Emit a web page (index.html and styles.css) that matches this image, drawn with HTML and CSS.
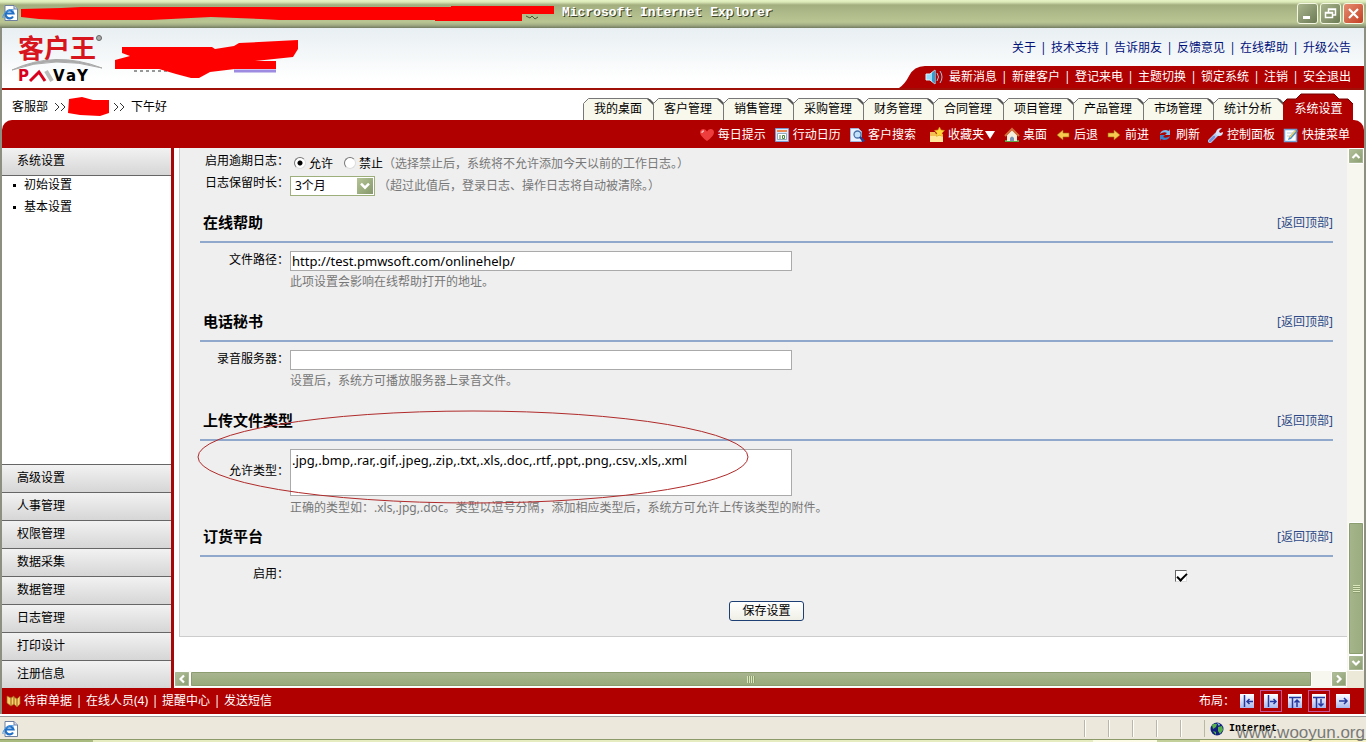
FILE: index.html
```html
<!DOCTYPE html>
<html lang="zh-CN">
<head>
<meta charset="utf-8">
<title>Microsoft Internet Explorer</title>
<link rel="stylesheet" href="styles.css">
</head>
<body>
<svg class="defs" aria-hidden="true">
  <defs>
    <linearGradient id="orb" x1="0" y1="0" x2="0" y2="1"><stop offset="0" stop-color="#ffffff"/><stop offset="1" stop-color="#a9b8ee"/></linearGradient>
    <symbol id="tab" viewBox="0 0 71 22"><path d="M.5 22V5.500L5.500.5H65.500L70.500 5.500V22" fill="#f8f8ec" stroke="#777"/><path d="M64 1h3l4 4v3z" fill="#555"/></symbol>
    <symbol id="tab-on" viewBox="0 0 71 27"><path d="M0 27V10l4-4h9l5-5h33l5 5h9l5 5v16z" fill="#b00000"/><path d="M0 10l4-4h9l5-5h33l5 5h9l5 5" fill="none" stroke="#700"/></symbol>
    <symbol id="ie" viewBox="0 0 16 16"><path d="M3 .5h9l3.500 3.500V15.500H3z" fill="#fff" stroke="#6f7f9f"/><path d="M12 .5V4h3.500" fill="#cdd9f2" stroke="#6f7f9f"/><path d="M11 11.500A4 4 0 1 1 11.500 8.500H4" fill="none" stroke="#2170c8" stroke-width="2.200"/><path d="M1 13C0 9 7 3 12 5" fill="none" stroke="#3f92dd"/></symbol>
    <symbol id="down" viewBox="0 0 14 14"><path d="M3.500 5l3.500 3.500L10.500 5" fill="none" stroke="#fff" stroke-width="2.200"/></symbol>
    <symbol id="up" viewBox="0 0 14 14"><path d="M3.500 9L7 5.500 10.500 9" fill="none" stroke="#fff" stroke-width="2.200"/></symbol>
    <symbol id="left" viewBox="0 0 14 14"><path d="M9 3.500L5.500 7 9 10.500" fill="none" stroke="#fff" stroke-width="2.200"/></symbol>
    <symbol id="right" viewBox="0 0 14 14"><path d="M5 3.500L8.500 7 5 10.500" fill="none" stroke="#fff" stroke-width="2.200"/></symbol>
  </defs>
</svg>

<header class="titlebar">
  <svg class="title-icon" width="16" height="16"><use href="#ie"/></svg>
  <svg class="title-mask" width="540" height="24" aria-hidden="true"><path d="M0 7L40 6 60 5H430V4H533V12H501V19H414V18H258L240 17 190 15 150 17 130 18H40L18 17 0 15z" fill="#f00"/><path d="M505 14l4 2 2-2 3 3 3-2" fill="none" stroke="#4b5433"/></svg>
  <h1 class="title-text">Microsoft Internet Explorer</h1>
  <div class="win-buttons">
    <button class="win" aria-label="最小化"><svg width="17" height="17"><path d="M4 11h7v3H4z" fill="#fff"/></svg></button>
    <button class="win" aria-label="还原"><svg width="17" height="17"><path d="M6.500 7V4h7v6H11M3.500 7.500h7v5h-7zM6 4.500h8M3 8h8" fill="none" stroke="#fff" stroke-width="1.500"/></svg></button>
    <button class="win win-close" aria-label="关闭"><svg width="17" height="17"><path d="M4 4l9 9M13 4l-9 9" stroke="#fff" stroke-width="2.200"/></svg></button>
  </div>
</header>

<div class="app">
  <div class="banner">
    <svg class="logo" width="100" height="58" role="img" aria-label="客户王">
      <text class="logo-cn" x="8" y="30">客户王</text>
      <circle cx="89" cy="10" r="2.500" fill="#aaa" stroke="#666"/>
      <path d="M2 42Q45 22 92 40Q45 27 2 42z" fill="#aaa" stroke="#aaa"/>
      <g class="logo-en"><text x="8" y="53" fill="#d8001c">P</text><path d="M20 53L29 44 35 53" fill="none" stroke="#d8001c" stroke-width="3"/><path d="M36 43L42 53" stroke="#bbb" stroke-width="4"/><text x="43" y="53">V</text><text x="56" y="53">a</text><text x="67" y="53">Y</text></g>
    </svg>
    <svg class="banner-mask" width="190" height="50" aria-hidden="true"><path d="M120 32h42" stroke="#9c8be0" stroke-width="3"/><path d="M20 32h35" stroke="#333" stroke-dasharray="3 3"/><path d="M8 8H98L101 10 120 7 125 4 184 1V10L179 18 141 22H162V30H121L96 33 85 39H77L62 35 45 30H1V21L16 17 8 14z" fill="#f00"/></svg>
    <div class="banner-links">
      <nav class="links links-top"><a href="#">关于</a><i>|</i><a href="#">技术支持</a><i>|</i><a href="#">告诉朋友</a><i>|</i><a href="#">反馈意见</a><i>|</i><a href="#">在线帮助</a><i>|</i><a href="#">升级公告</a></nav>
      <nav class="links links-red">
        <svg class="curve" width="26" height="22" aria-hidden="true"><path d="M0 22Q6 18 10 10Q15 0 26 0V22z" fill="#b00000"/></svg>
        <svg class="speaker" width="19" height="16" aria-hidden="true"><path d="M1 5h4l5-4v14L5 11H1z" fill="#9adcf8" stroke="#d9f4ff"/><path d="M7 4v8l3 3V1z" fill="#2e9dd2"/><path d="M12 4q3 4 0 8M15 2q4 6 0 12" fill="none" stroke="#9cc9e8"/></svg>
        <a href="#">最新消息</a><i>|</i><a href="#">新建客户</a><i>|</i><a href="#">登记来电</a><i>|</i><a href="#">主题切换</a><i>|</i><a href="#">锁定系统</a><i>|</i><a href="#">注销</a><i>|</i><a href="#">安全退出</a>
      </nav>
    </div>
  </div>

  <div class="tabs-row">
    <div class="crumbs"><span>客服部</span><svg width="12" height="10"><path d="M1 1l4 4-4 4M7 1l4 4-4 4" fill="none" stroke="#333"/></svg><svg class="crumb-mask" width="43" height="20" aria-hidden="true"><path d="M1 2L14 0 25 3H41V16L32 19 12 18 0 16z" fill="#f00"/></svg><svg width="12" height="10"><path d="M1 1l4 4-4 4M7 1l4 4-4 4" fill="none" stroke="#333"/></svg><span>下午好</span></div>
    <nav class="tabs">
      <a class="tab" href="#"><svg><use href="#tab"/></svg><span>我的桌面</span></a>
      <a class="tab" href="#"><svg><use href="#tab"/></svg><span>客户管理</span></a>
      <a class="tab" href="#"><svg><use href="#tab"/></svg><span>销售管理</span></a>
      <a class="tab" href="#"><svg><use href="#tab"/></svg><span>采购管理</span></a>
      <a class="tab" href="#"><svg><use href="#tab"/></svg><span>财务管理</span></a>
      <a class="tab" href="#"><svg><use href="#tab"/></svg><span>合同管理</span></a>
      <a class="tab" href="#"><svg><use href="#tab"/></svg><span>项目管理</span></a>
      <a class="tab" href="#"><svg><use href="#tab"/></svg><span>产品管理</span></a>
      <a class="tab" href="#"><svg><use href="#tab"/></svg><span>市场管理</span></a>
      <a class="tab" href="#"><svg><use href="#tab"/></svg><span>统计分析</span></a>
      <a class="tab tab-on" href="#"><svg><use href="#tab-on"/></svg><span>系统设置</span></a>
    </nav>
  </div>

  <nav class="toolbar">
    <a href="#"><svg width="16" height="16"><path d="M8 14Q1 9 1 5.500Q1 2 4.500 2Q7 2 8 4.500Q9 2 11.500 2Q15 2 15 5.500Q15 9 8 14z" fill="#ee3d3d"/><path d="M3 6q0-2 2-2" fill="none" stroke="#ffb0b0" stroke-width="1.500"/></svg>每日提示</a>
    <a href="#"><svg width="16" height="16"><path d="M1.500 1.500h13v13h-13z" fill="#dbe9ff" stroke="#7b9ad0"/><path d="M3 3h10v2H3z" fill="#ee8850"/><path d="M3.500 6.500h9v6h-9z" fill="#fff" stroke="#9ab"/><path d="M6 8v4M8.500 8.500h2v3h-2z" fill="none" stroke="#4a8a40"/></svg>行动日历</a>
    <a href="#"><svg width="16" height="16"><path d="M1.500 1.500h8l3 3v10h-11z" fill="#eaf1ff" stroke="#9db4dd"/><circle cx="8.500" cy="7.500" r="3.500" fill="#c3e2fa" stroke="#4672a8" stroke-width="1.300"/><path d="M11 10l4 4.500" stroke="#2a3f8e" stroke-width="2.500"/></svg>客户搜索</a>
    <a class="menu-tool" href="#"><svg width="16" height="16"><path d="M1 5h5l1 2h7v8H1z" fill="#f2bf55"/><path d="M1 9h13v6H1z" fill="#ffe59a"/><path d="M10.500 0l1.500 3 3.500.5-2.500 2.500.5 3.500-3-1.500-3 1.500.5-3.500L5.500 3.500 9 3z" fill="#ffd638" stroke="#d79b20" stroke-width=".5"/></svg>收藏夹<svg class="caret" width="12" height="12"><path d="M1 2h10L6 10z" fill="#fff"/></svg></a>
    <a href="#"><svg width="16" height="16"><path d="M1 13h14v2H1z" fill="#5fa348"/><path d="M3 8l5-5 5 5v6H3z" fill="#f4eedc"/><path d="M1 9l7-7 7 7" fill="none" stroke="#d3703a" stroke-width="2"/><path d="M6 14v-3q2-3 4 0v3z" fill="#7d95b5"/></svg>桌面</a>
    <a href="#"><svg width="16" height="16"><path d="M2 8l6-5v3h6v4H8v3z" fill="#f7c94e" stroke="#9b6c11" stroke-width=".6"/></svg>后退</a>
    <a href="#"><svg width="16" height="16"><path d="M14 8L8 3v3H2v4h6v3z" fill="#f7c94e" stroke="#9b6c11" stroke-width=".6"/></svg>前进</a>
    <a href="#"><svg width="16" height="16"><path d="M3 7q1-4 6-4l3 1 1-2v6H8l2-2q-3-2-7 1z" fill="#7dbcf0"/><path d="M13 9q-1 4-6 4l-3-1-1 2V8h5L6 10q3 2 7-1z" fill="#3c83cc"/></svg>刷新</a>
    <a href="#"><svg width="16" height="16"><path d="M2 14l7-7" stroke="#b8cdf2" stroke-width="4" stroke-linecap="round"/><path d="M2 14l4-4" stroke="#7994da" stroke-width="2.500" stroke-linecap="round"/><path d="M14 1l-3 3 1 2 3-1q0 4-4 4Q7 8 8 5q1-4 6-4z" fill="#d6e4fa"/></svg>控制面板</a>
    <a href="#"><svg width="16" height="16"><path d="M1.500 2.500h12v12h-12z" fill="#fff" stroke="#72a2d6" stroke-width="1.500"/><path d="M4 6h6M4 9h4" stroke="#b8cce0"/><path d="M13 2l2 2-7 8-3 1 1-3z" fill="#4f90c4"/><path d="M6 10l6-7 1 1-6 7z" fill="#f1d45e"/></svg>快捷菜单</a>
  </nav>

  <div class="main">
    <aside class="side">
      <a class="side-head" href="#">系统设置</a>
      <ul class="side-list"><li><a href="#">初始设置</a></li><li><a href="#">基本设置</a></li></ul>
      <nav class="side-groups">
        <a class="side-head" href="#">高级设置</a><a class="side-head" href="#">人事管理</a><a class="side-head" href="#">权限管理</a><a class="side-head" href="#">数据采集</a><a class="side-head" href="#">数据管理</a><a class="side-head" href="#">日志管理</a><a class="side-head" href="#">打印设计</a><a class="side-head" href="#">注册信息</a>
      </nav>
    </aside>

    <div class="view">
      <main class="page">
        <form class="panel">
          <div class="row row-first">
            <span class="label">启用逾期日志：</span>
            <div class="field inline">
              <input type="radio" name="late" id="late-on" checked><label for="late-on">允许</label>
              <input class="second" type="radio" name="late" id="late-off"><label for="late-off">禁止</label>
              <span class="hint">（选择禁止后，系统将不允许添加今天以前的工作日志。）</span>
            </div>
          </div>
          <div class="row">
            <label class="label" for="keep">日志保留时长：</label>
            <div class="field inline">
              <span class="select"><select id="keep"><option>3个月</option></select><svg width="16" height="16" aria-hidden="true"><use href="#down"/></svg></span>
              <span class="hint select-hint">（超过此值后，登录日志、操作日志将自动被清除。）</span>
            </div>
          </div>

          <section>
            <div class="section-head"><h2>在线帮助</h2><a href="#">[返回顶部]</a></div>
            <div class="row"><label class="label" for="path">文件路径：</label><div class="field"><input class="text" id="path" type="text" value="http://test.pmwsoft.com/onlinehelp/"><p class="hint">此项设置会影响在线帮助打开的地址。</p></div></div>
          </section>
          <section>
            <div class="section-head"><h2>电话秘书</h2><a href="#">[返回顶部]</a></div>
            <div class="row"><label class="label" for="rec">录音服务器：</label><div class="field"><input class="text" id="rec" type="text"><p class="hint">设置后，系统方可播放服务器上录音文件。</p></div></div>
          </section>
          <section class="upload">
            <div class="section-head"><h2>上传文件类型</h2><a href="#">[返回顶部]</a></div>
            <div class="row row-tall"><label class="label" for="types">允许类型：</label><div class="field"><textarea class="text" id="types">.jpg,.bmp,.rar,.gif,.jpeg,.zip,.txt,.xls,.doc,.rtf,.ppt,.png,.csv,.xls,.xml</textarea></div></div>
            <p class="hint hint-below">正确的类型如：.xls,.jpg,.doc。类型以逗号分隔，添加相应类型后，系统方可允许上传该类型的附件。</p>
            <svg class="ring" width="552" height="96" aria-hidden="true"><ellipse cx="276" cy="48" rx="275" ry="46" fill="none" stroke="#b02a2a"/></svg>
          </section>
          <section class="order">
            <div class="section-head"><h2>订货平台</h2><a href="#">[返回顶部]</a></div>
            <div class="row"><label class="label" for="enable">启用：</label><div class="field check-field"><input type="checkbox" id="enable" checked></div></div>
          </section>
          <div class="actions"><button class="save" type="submit">保存设置</button></div>
        </form>
      </main>
      <div class="vbar" aria-hidden="true"><span class="sb"><svg><use href="#up"/></svg></span><span class="vtrack"><span class="vthumb"><b></b></span></span><span class="sb"><svg><use href="#down"/></svg></span></div>
      <div class="hbar" aria-hidden="true"><span class="sb"><svg><use href="#left"/></svg></span><span class="htrack"><span class="hthumb"><b></b></span></span><span class="sb"><svg><use href="#right"/></svg></span></div>
    </div>
  </div>

  <footer class="bottom">
    <svg width="15" height="14" aria-hidden="true"><path d="M1 2l4 2v8L1 9zM5 4l3-2v8l-3 2zM8 3l3 2v8l-3-3zM11 5l3-3v8l-3 3z" fill="#f7cf6b" stroke="#a8691b" stroke-width=".7"/></svg>
    <a href="#">待审单据</a><i>|</i><a href="#">在线人员(4)</a><i>|</i><a href="#">提醒中心</a><i>|</i><a href="#">发送短信</a>
    <span class="layout-label">布局：</span>
    <button aria-label="布局1" class="lay"><svg width="14" height="14"><path d="M0 0h14v14H0z" fill="url(#orb)"/><path d="M4.500 1v12M13 7.500H7M9.500 5L7 7.500 9.500 10" fill="none" stroke="#2638a0" stroke-width="1.500"/></svg></button>
    <button aria-label="布局2" class="lay lay-on"><svg width="14" height="14"><path d="M0 0h14v14H0z" fill="url(#orb)"/><path d="M4.500 1v12M6 7.500h6M9.500 5L12 7.500 9.500 10" fill="none" stroke="#2638a0" stroke-width="1.500"/></svg></button>
    <button aria-label="布局3" class="lay"><svg width="14" height="14"><path d="M0 0h14v14H0z" fill="url(#orb)"/><path d="M4.500 3v11M1 3.500h12M9 13V6M6.500 8.500L9 6l2.500 2.500" fill="none" stroke="#2638a0" stroke-width="1.500"/></svg></button>
    <button aria-label="布局4" class="lay lay-on"><svg width="14" height="14"><path d="M0 0h14v14H0z" fill="url(#orb)"/><path d="M4.500 3v11M1 3.500h12M9 5v7M6.500 9.500L9 12l2.500-2.500" fill="none" stroke="#2638a0" stroke-width="1.500"/></svg></button>
    <button aria-label="布局5" class="lay"><svg width="14" height="14"><path d="M0 0h14v14H0z" fill="url(#orb)"/><path d="M3 7h8M8 4l3 3-3 3" fill="none" stroke="#2638a0" stroke-width="1.500"/></svg></button>
  </footer>
</div>

<div class="status">
  <svg width="16" height="16" aria-hidden="true"><use href="#ie"/></svg>
  <span class="cells"><span></span><span></span><span></span><span></span><span></span></span>
  <span class="zone"><svg width="14" height="14" aria-hidden="true"><circle cx="7" cy="7" r="6.500" fill="#12207d"/><path d="M2 3q3-2 5-1l-1 3-3 2zM8 5l4-1 1 4-3 4-2-3zM3 9l3 1v3z" fill="#58b24c"/><path d="M7 1l3 1-1 2z" fill="#9cc9e8"/></svg>Internet</span>
</div>
<div class="taskbar" aria-hidden="true"><span class="t1"></span><span class="t2"></span><span class="t3"></span><span class="t4"></span><span class="t5"></span></div>
<div class="watermark">www.wooyun.org</div>
</body>
</html>
```

FILE: styles.css
```css
* { box-sizing: border-box; }
html, body { height: 100%; }
body {
  margin: 0;
  display: flex;
  flex-direction: column;
  overflow: hidden;
  position: relative;
  font: 12px/16px "Noto Sans", "Noto Sans CJK SC", sans-serif;
  color: #000;
  background: #ece9d8;
}
a { color: inherit; text-decoration: none; }
i { font-style: normal; text-align: center; }
h1, h2, p, ul { margin: 0; padding: 0; }
button, input, select, textarea { font: inherit; color: inherit; margin: 0; }
svg { display: block; flex: none; }
.defs { position: absolute; width: 0; height: 0; }

/* window title */
.titlebar {
  flex: none;
  position: relative;
  display: flex;
  align-items: center;
  height: 28px;
  padding: 0 2px 2px;
  background: linear-gradient(#e6f3c4 0, #dbe8b8 2px, #a3ae7f 5px, #adb988 12px, #b9c592 22px, #a3ad86 25px, #737b60 28px);
}
.title-mask { position: absolute; left: 21px; top: 2px; }
.title-text {
  margin-left: 544px;
  font: bold 13px/16px "Liberation Mono", monospace;
  color: #fff;
  text-shadow: 1px 1px 0 #3c4328;
}
.win-buttons { display: flex; gap: 2px; margin-left: auto; }
.win {
  width: 21px;
  height: 21px;
  padding: 1px;
  border: 1px solid #f4f8e2;
  border-radius: 3px;
  background: linear-gradient(135deg, #a9b58d, #6d7b55);
}
.win-close { background: linear-gradient(135deg, #e58e72, #c43e22); }

.app {
  flex: 1;
  min-height: 0;
  display: flex;
  flex-direction: column;
  border: solid #8d8f80;
  border-width: 0 2px;
  background: #fff;
}

/* banner */
.banner {
  flex: none;
  position: relative;
  display: flex;
  height: 62px;
  border-bottom: 2px solid #a01008;
  background: linear-gradient(#e8eff2, #fff 85%);
}
.logo { margin-left: 8px; overflow: visible; }
.logo-cn { font: bold 26px "Noto Sans CJK SC", sans-serif; fill: #d8141c; }
.logo-en { font: bold 15px "DejaVu Sans", sans-serif; }
.banner-mask { position: absolute; left: 112px; top: 11px; }
.banner-links { margin-left: auto; display: flex; flex-direction: column; align-items: flex-end; }
.links { display: flex; align-items: center; }
.links i { width: 15px; }
.links-top { height: 40px; padding: 2px 13px 0 0; color: #00117a; }
.links-red { height: 22px; padding-right: 13px; color: #fff; background: #b00000; }
.curve { margin-left: -26px; }
.speaker { margin-right: 5px; }

/* tabs */
.tabs-row { flex: none; display: flex; justify-content: space-between; height: 30px; }
.crumbs { display: flex; align-items: center; gap: 6px; padding: 4px 0 0 10px; }
.crumb-mask { margin: 0 -4px; }
.tabs { display: flex; align-items: flex-end; padding-right: 10px; }
.tab { position: relative; width: 70px; height: 22px; line-height: 22px; text-align: center; }
.tab svg { position: absolute; left: 0; top: 0; width: 71px; height: 22px; }
.tab span { position: relative; }
.tab-on { width: 71px; height: 27px; line-height: 32px; color: #fff; }
.tab-on svg { height: 27px; }

.toolbar {
  flex: none;
  display: flex;
  justify-content: flex-end;
  gap: 8px;
  height: 28px;
  padding: 2px 14px 0 0;
  border-radius: 10px 10px 0 0;
  color: #fff;
  background: #b00000;
}
.toolbar a { display: flex; align-items: center; gap: 3px; }
.toolbar .menu-tool { margin-left: 5px; }
.toolbar .caret { margin-left: -3px; }

/* main area */
.main { flex: 1; min-height: 0; display: flex; }
.side {
  flex: none;
  display: flex;
  flex-direction: column;
  width: 172px;
  border-right: 3px solid #a50808;
}
.side-head {
  display: block;
  height: 28px;
  padding: 5px 15px;
  border-bottom: 1px solid #666;
  background: linear-gradient(#f2f2f2, #d6d6d6);
}
.side-list { list-style: none; flex: 1; }
.side-list li { display: flex; align-items: center; height: 22px; padding: 0 0 4px 11px; }
.side-list li::before { content: ""; width: 3px; height: 3px; margin-right: 8px; background: #000; }
.side-groups .side-head { border-bottom: 0; border-top: 1px solid #666; }

.view {
  flex: 1;
  min-width: 0;
  display: grid;
  grid-template: minmax(0, 1fr) 17px / minmax(0, 1fr) 17px;
  background: #ece9d8;
}
.page { overflow: hidden; padding-left: 5px; background: #fff; }
.panel {
  padding: 5px 14px 15px 20px;
  border: solid #ccc;
  border-width: 0 0 1px 1px;
  background: #efefef;
}
.row { display: flex; gap: 1px; }
.row-first { height: 22px; }
.label { width: 89px; flex: none; text-align: right; white-space: nowrap; }
.field { flex: 1; min-width: 0; }
.inline { display: flex; align-items: center; height: 21px; }
.hint { color: #777; white-space: nowrap; }
input[type="radio"] {
  appearance: none;
  width: 12px;
  height: 12px;
  margin: 0 3px 2px 4px;
  border: 1px solid;
  border-color: #777 #ddd #ddd #777;
  border-radius: 50%;
  background: #fff;
}
input[type="radio"]:checked { background: radial-gradient(#000 2px, #fff 3px); }
input[type="radio"].second { margin-left: 11px; }
.select { position: relative; width: 85px; height: 20px; }
.select select {
  appearance: none;
  width: 100%;
  height: 100%;
  padding: 0 4px;
  border: 1px solid #9db07c;
  background: #fff;
}
.select svg { position: absolute; right: 2px; top: 2px; background: linear-gradient(135deg, #b5c496, #86996a); }
.select-hint { margin-left: 3px; }

section { position: relative; height: 99px; }
.section-head {
  display: flex;
  justify-content: space-between;
  align-items: center;
  height: 47px;
  padding: 6px 0 0 3px;
  margin-bottom: 8px;
  border-bottom: 2px solid #8fa8cc;
}
.section-head h2 { font-size: 15px; line-height: 20px; }
.section-head a { padding-top: 2px; color: #2d4a86; }
.text {
  display: block;
  width: 502px;
  max-width: 100%;
  height: 20px;
  padding: 0 1px;
  border: 1px solid #aaa;
  border-radius: 0;
  background: #fff;
  font-size: 13px;
  line-height: 20px;
}
section .label { padding-top: 1px; }
.field .hint { margin-top: 3px; }
.inline .hint { margin-top: 0; }
textarea.text { height: 47px; resize: none; overflow: hidden; }
.upload { height: 116px; }
.row-tall { align-items: center; }
section .row-tall .label { padding: 0 0 4px; }
.hint-below { margin: 4px 0 0 90px; }
.ring { position: absolute; left: -3px; top: 15px; }
.order { height: 91px; }
.check-field { padding: 5px 146px 0 0; text-align: right; }
input[type="checkbox"] {
  appearance: none;
  display: block;
  width: 12px;
  height: 12px;
  margin-left: auto;
  border: 1px solid;
  border-color: #666 #ddd #ddd #666;
  background: #fff;
}
input[type="checkbox"]:checked::before {
  content: "";
  display: block;
  width: 8px;
  height: 4px;
  margin: 2px 0 0 1px;
  border: solid #000;
  border-width: 0 0 2px 2px;
  transform: rotate(-45deg);
}
.actions { display: flex; justify-content: center; }
.save {
  width: 75px;
  height: 20px;
  padding: 0;
  border: 1px solid #1d3f73;
  border-radius: 3px;
  line-height: 16px;
  background: linear-gradient(#fff, #f0efe6);
}

/* scroll bars */
.vbar, .hbar { display: flex; background: #f7f7ef; }
.vbar { flex-direction: column; align-items: flex-end; }
.sb {
  flex: none;
  width: 16px;
  height: 16px;
  border: 1px solid #fff;
  border-radius: 2px;
  outline: 1px solid #aab794;
  outline-offset: -2px;
  background: linear-gradient(135deg, #b3c19b, #8a9c70);
}
.sb svg { width: 14px; height: 14px; }
.vtrack, .htrack { flex: 1; display: flex; }
.vtrack { flex-direction: column; justify-content: flex-end; }
.htrack { padding-right: 19px; }
.vthumb, .hthumb { display: flex; align-items: center; justify-content: center; border: 1px solid #fff; border-radius: 2px; outline: 1px solid #8c9e70; outline-offset: -2px; }
.vthumb { height: 27%; width: 16px; background: linear-gradient(90deg, #a6b58b, #9bac80); }
.hthumb { flex: 1; height: 16px; background: linear-gradient(#a9b591, #97aa78); }
.vthumb b { width: 7px; height: 8px; background: repeating-linear-gradient(#dbe7bd 0 1px, #8c9e70 1px 2px); }
.hthumb b { width: 8px; height: 7px; background: repeating-linear-gradient(90deg, #dbe7bd 0 1px, #8c9e70 1px 2px); }

/* footer */
.bottom {
  flex: none;
  display: flex;
  align-items: center;
  height: 26px;
  padding: 0 9px 0 4px;
  color: #fff;
  background: #b00000;
}
.bottom > svg { margin-right: 3px; }
.bottom i { width: 14px; }
.layout-label { margin-left: auto; }
.lay { display: flex; align-items: center; justify-content: center; width: 22px; height: 22px; margin: 0 1px; padding: 0; border: 0; background: none; }
.lay-on { border: 1px solid #c0559a; }

.status {
  flex: none;
  display: flex;
  align-items: center;
  height: 25px;
  padding: 2px 2px 0;
  border-top: 2px solid #fff;
  box-shadow: inset 0 1px #999;
  background: #ece9dc;
}
.cells { display: flex; margin-left: auto; }
.cells span { width: 24px; height: 17px; border-left: 1px solid #bbb7a5; box-shadow: inset 1px 0 #fff; }
.zone {
  display: flex;
  align-items: center;
  gap: 5px;
  width: 160px;
  padding-left: 5px;
  border-left: 1px solid #bbb7a5;
  font: bold 10px/17px "Liberation Mono", monospace;
}
.taskbar { flex: none; display: flex; height: 3px; border-top: 1px solid #8b9a68; }
.taskbar .t1 { width: 93px; background: #a9bb7e; }
.taskbar .t2 { flex: 1; background: #e6ebc0; }
.taskbar .t3 { width: 64px; background: #fbfbe6; }
.taskbar .t4 { width: 43px; background: #c4d09a; }
.taskbar .t5 { width: 166px; background: #f6f2c6; }
.watermark {
  position: absolute;
  right: 1px;
  bottom: 0;
  font: 17px/18px "Liberation Sans", sans-serif;
  color: #666;
  opacity: .85;
}
```
